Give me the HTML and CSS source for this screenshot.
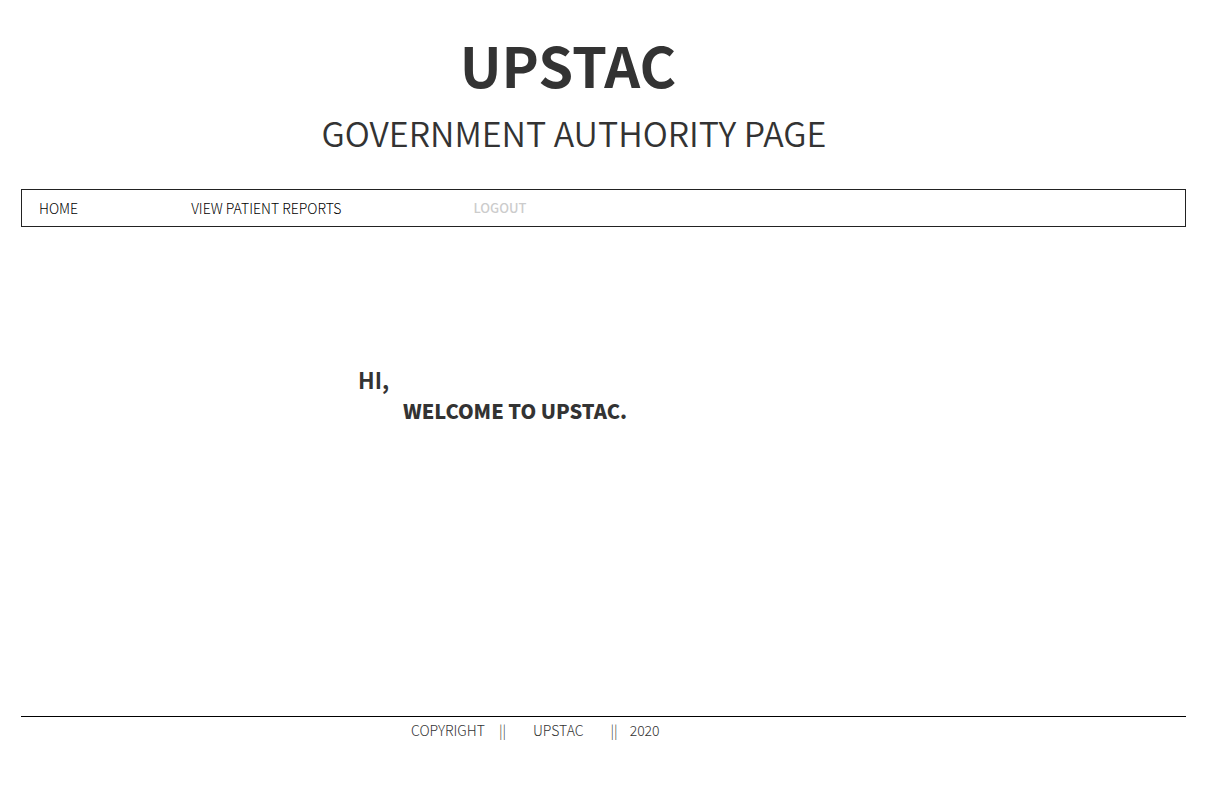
FILE: index.html
```
<!DOCTYPE html>
<html lang="en">
<head>
<meta charset="utf-8">
<title>UPSTAC</title>
<link rel="stylesheet" href="styles.css">
</head>
<body>
<header class="masthead">
  <h1 class="brand">UPSTAC</h1>
  <p class="subtitle">GOVERNMENT AUTHORITY PAGE</p>
</header>
<nav class="menu">
  <a class="menu-link home" href="#">HOME</a>
  <a class="menu-link reports" href="#">VIEW PATIENT REPORTS</a>
  <a class="menu-link logout" href="#">LOGOUT</a>
</nav>
<main class="welcome">
  <p class="greeting">HI,</p>
  <p class="message">WELCOME TO UPSTAC.</p>
</main>
<footer class="footer">
  <span class="copyright">COPYRIGHT</span>
  <span class="bar">||</span>
  <span class="owner">UPSTAC</span>
  <span class="bar">||</span>
  <span class="year">2020</span>
</footer>
</body>
</html>
```
FILE: styles.css
```
* {
  box-sizing: border-box;
}

body {
  display: flex;
  flex-direction: column;
  min-height: 100vh;
  margin: 0;
  padding: 24px 25px 60px 21px;
  background: #fff;
  color: #333;
  font-family: "Noto Sans CJK SC", "Noto Sans", sans-serif;
  font-weight: 300;
}

h1,
p {
  margin: 0;
}

.masthead {
  padding-right: 71px;
  text-align: center;
}

.brand {
  font-size: 56px;
  line-height: 80px;
  font-weight: 700;
}

.subtitle {
  padding-left: 12px;
  margin-top: 5px;
  font-size: 34px;
  line-height: 48px;
  font-weight: 350;
}

.menu {
  display: flex;
  margin-top: 32px;
  padding: 8px 17px;
  border: 1px solid #222;
}

.menu-link {
  color: #000;
  font-size: 14px;
  line-height: 20px;
  text-decoration: none;
}

.reports {
  margin-left: 113px;
}

.menu .logout {
  margin-left: 132px;
  color: #ccc;
  font-size: 13px;
  font-weight: 500;
}

.welcome {
  flex: 1;
  padding: 136px 0 0 337px;
  font-size: 22px;
  line-height: 32px;
  font-weight: 700;
}

.message {
  padding-left: 45px;
  font-size: 20px;
  font-weight: 900;
}

.footer {
  display: flex;
  padding-left: 390px;
  border-top: 1px solid #000;
  font-size: 14px;
  line-height: 26px;
}

.copyright {
  margin-right: 14px;
}

.owner {
  margin: 0 27px;
}

.year {
  margin-left: 12px;
}
```
